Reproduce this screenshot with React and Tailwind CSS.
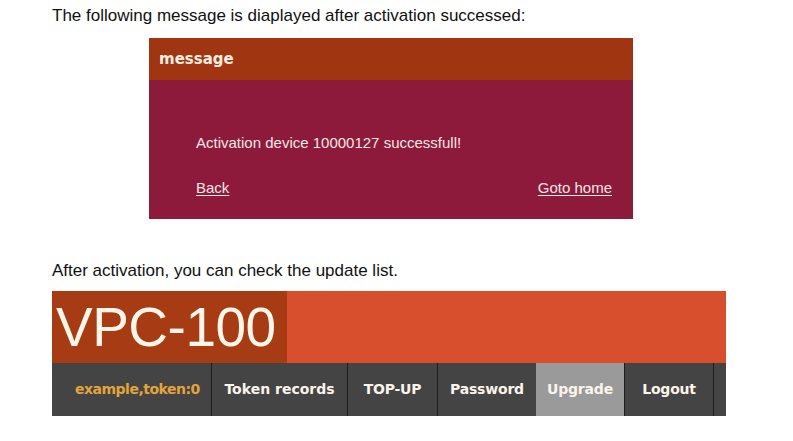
import React from "react";

const navItems = [
  { label: "example,token:0", width: "w-[160px]", pad: "pl-[23px] justify-start", color: "text-[#e3a53a]", track: "tracking-[-0.5px]" },
  { label: "Token records", width: "w-[136px]", pad: "justify-center", color: "text-[#fbf4ea]", track: "tracking-[0px]" },
  { label: "TOP-UP", width: "w-[90px]", pad: "justify-center", color: "text-[#fbf4ea]", track: "tracking-[-0.2px]" },
  { label: "Password", width: "w-[98px]", pad: "justify-center", color: "text-[#fbf4ea]", track: "tracking-[-0.2px]", noBorder: true },
  { label: "Upgrade", width: "w-[89px]", pad: "justify-center", color: "text-[#fbf4ea]", track: "tracking-[-0.2px]", active: true },
  { label: "Logout", width: "w-[89px]", pad: "justify-center", color: "text-[#fbf4ea]", track: "tracking-[-0.2px]" },
];

function App() {
  return (
    <div className="w-[793px] h-[441px] bg-white overflow-hidden font-['Liberation_Sans',Arial,sans-serif]">
      <div className="pl-[52px] pt-[6px]">
        {/* intro line */}
        <p className="text-[17px] leading-[19px] text-[#111]">
          The following message is diaplayed after activation successed:
        </p>

        {/* message box */}
        <div className="mt-[13px] ml-[97px] w-[484px]">
          <div className="h-[42px] bg-[#9f3611] flex items-center pl-[10px]">
            <span className="font-['DejaVu_Sans',sans-serif] font-bold text-[15px] text-[#fbf0e0]">message</span>
          </div>
          <div className="h-[139px] bg-[#8d1a3a] pl-[47px] pr-[21px] pt-[54px] text-[15px] text-[#f6e6e6]">
            <p className="leading-[17px]">Activation device 10000127 successfull!</p>
            <div className="mt-[28px] flex justify-between leading-[17px]">
              <a className="underline underline-offset-2">Back</a>
              <a className="underline underline-offset-2">Goto home</a>
            </div>
          </div>
        </div>

        {/* second line */}
        <p className="mt-[42px] text-[17px] leading-[19px] text-[#111]">
          After activation, you can check the update list.
        </p>

        {/* VPC banner */}
        <div className="mt-[11px] w-[674px]">
          <div className="h-[72px] flex bg-[#d74f2d]">
            <div className="w-[235px] bg-[#a73b13] flex items-center pl-[4px]">
              <span className="text-[55px] leading-none text-[#fff6ea] tracking-[-0.5px]">VPC-100</span>
            </div>
          </div>
          <div className="h-[53px] flex bg-[#444444]">
            {navItems.map((item) => (
              <div
                key={item.label}
                className={`${item.width} flex items-center ${item.pad} ${item.active ? "bg-[#9a9a9a]" : ""} ${item.noBorder ? "" : "border-r border-[#1c1c1c]"}`}
              >
                <span className={`font-['DejaVu_Sans',sans-serif] font-bold text-[14px] ${item.track} ${item.color}`}>
                  {item.label}
                </span>
              </div>
            ))}
          </div>
        </div>
      </div>
    </div>
  );
}

export default App;
